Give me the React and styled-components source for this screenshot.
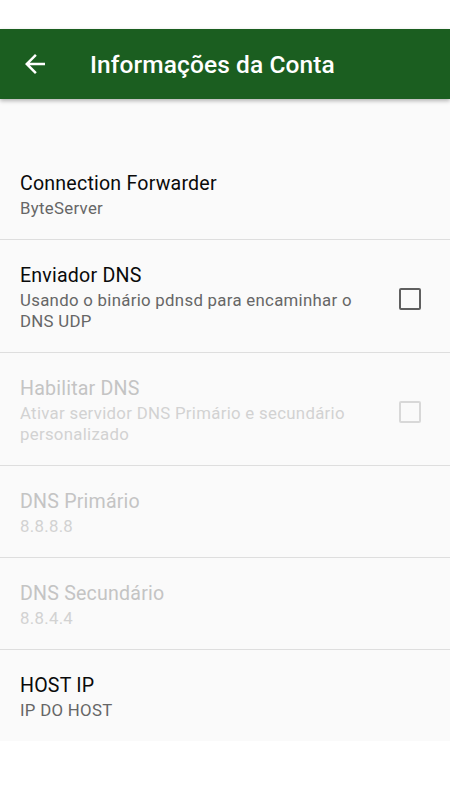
import React from 'react'
import styled, { createGlobalStyle } from 'styled-components'

const GlobalStyle = createGlobalStyle`
  html, body {
    margin: 0;
    padding: 0;
    background: #ffffff;
    font-family: Roboto, "Noto Sans", Arial, sans-serif;
  }
`

const Screen = styled.div`
  width: 450px;
  padding-top: 29px;
  display: flex;
  flex-direction: column;
`

const Toolbar = styled.header`
  height: 70px;
  background: #1b5e20;
  display: flex;
  align-items: center;
  box-shadow: 0 2px 4px rgba(0, 0, 0, 0.28);
  position: relative;
  z-index: 1;
`

const BackButton = styled.button`
  border: none;
  background: transparent;
  padding: 0;
  margin-left: 20px;
  width: 30px;
  height: 30px;
  display: flex;
  align-items: center;
  justify-content: center;
  cursor: pointer;
  svg { display: block; }
`

const Title = styled.h1`
  margin: 0 0 0 40px;
  color: #ffffff;
  font-size: 24.5px;
  font-weight: 500;
  letter-spacing: 0.1px;
`

const List = styled.div`
  background: #fafafa;
  display: flex;
  flex-direction: column;
`

const Spacer = styled.div`
  height: 49px;
`

const Row = styled.div`
  display: flex;
  align-items: center;
  padding: 24px 29px 18px 20px;
  border-bottom: ${p => (p.$last ? 'none' : '1px solid #dedede')};
`

const Texts = styled.div`
  flex: 1;
  min-width: 0;
  padding-right: 30px;
`

const ItemTitle = styled.div`
  font-size: 19.6px;
  line-height: 24px;
  letter-spacing: 0.2px;
  color: ${p => (p.$disabled ? '#c4c4c4' : '#0a0a0a')};
`

const ItemSummary = styled.div`
  margin-top: 2px;
  padding-bottom: 2px;
  font-size: 16.8px;
  line-height: 21px;
  letter-spacing: 0.3px;
  color: ${p => (p.$disabled ? '#d2d2d2' : '#666666')};
`

const Box = styled.span`
  flex: none;
  width: 18px;
  height: 18px;
  border: 2.2px solid ${p => (p.$disabled ? '#d8d8d8' : '#5f5f5f')};
  border-radius: 2px;
`

const ArrowBack = () => (
  <svg width="30" height="30" viewBox="0 0 24 24" fill="#ffffff">
    <path d="M20 11H7.83l5.59-5.59L12 4l-8 8 8 8 1.41-1.41L7.83 13H20v-2z" />
  </svg>
)

const items = [
  { title: 'Connection Forwarder', summary: 'ByteServer' },
  { title: 'Enviador DNS', summary: 'Usando o binário pdnsd para encaminhar o DNS UDP', check: true },
  { title: 'Habilitar DNS', summary: 'Ativar servidor DNS Primário e secundário personalizado', check: true, disabled: true },
  { title: 'DNS Primário', summary: '8.8.8.8', disabled: true },
  { title: 'DNS Secundário', summary: '8.8.4.4', disabled: true },
  { title: 'HOST IP', summary: 'IP DO HOST' },
]

export default function App() {
  return (
    <Screen>
      <GlobalStyle />
      <Toolbar>
        <BackButton aria-label="Voltar"><ArrowBack /></BackButton>
        <Title>Informações da Conta</Title>
      </Toolbar>
      <List>
        <Spacer />
        {items.map((item, i) => (
          <Row key={item.title} $last={i === items.length - 1}>
            <Texts>
              <ItemTitle $disabled={item.disabled}>{item.title}</ItemTitle>
              <ItemSummary $disabled={item.disabled}>{item.summary}</ItemSummary>
            </Texts>
            {item.check && <Box $disabled={item.disabled} />}
          </Row>
        ))}
      </List>
    </Screen>
  )
}
